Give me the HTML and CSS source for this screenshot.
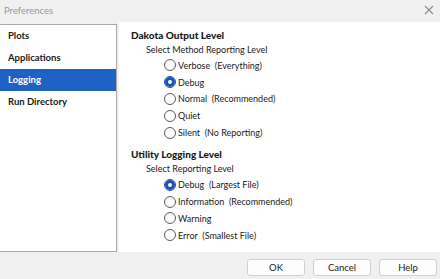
FILE: index.html
```html
<!DOCTYPE html>
<html lang="en">
<head>
<meta charset="UTF-8">
<title>Preferences</title>
<link rel="stylesheet" href="styles.css">
</head>
<body>
<div class="window">
    <div class="titlebar">
        <span class="title">Preferences</span>
        <svg class="close" width="10" height="10" viewBox="0 0 10 10">
            <path d="M1 1L9 9M9 1L1 9" stroke="#8a8a8a" stroke-width="1.1" fill="none"/>
        </svg>
    </div>
    <div class="main">
        <ul class="sidebar">
            <li>Plots</li>
            <li>Applications</li>
            <li class="active">Logging</li>
            <li>Run Directory</li>
        </ul>
        <div class="content">
            <div class="group">
                <h3>Dakota Output Level</h3>
                <div class="sub">Select Method Reporting Level</div>
                <label class="radio"><span class="dot"></span>Verbose  (Everything)</label>
                <label class="radio"><span class="dot on"></span>Debug</label>
                <label class="radio"><span class="dot"></span>Normal  (Recommended)</label>
                <label class="radio"><span class="dot"></span>Quiet</label>
                <label class="radio"><span class="dot"></span>Silent  (No Reporting)</label>
            </div>
            <div class="group second">
                <h3>Utility Logging Level</h3>
                <div class="sub">Select Reporting Level</div>
                <label class="radio"><span class="dot on"></span>Debug  (Largest File)</label>
                <label class="radio"><span class="dot"></span>Information  (Recommended)</label>
                <label class="radio"><span class="dot"></span>Warning</label>
                <label class="radio"><span class="dot"></span>Error  (Smallest File)</label>
            </div>
        </div>
    </div>
    <div class="footer">
        <button>OK</button>
        <button>Cancel</button>
        <button>Help</button>
    </div>
</div>
</body>
</html>
```

FILE: styles.css
```css
body {
  margin: 0;
  background-color: #f0f0f0;
  font-family: 'Lato', 'Noto Sans', sans-serif;
  font-size: 9px;
  color: #1a1a1a;
}

.window {
  width: 440px;
  height: 279px;
  display: flex;
  flex-direction: column;
}

.titlebar {
  height: 20px;
  display: flex;
  justify-content: space-between;
  align-items: center;
  padding: 0 6px 2px 4px;
}

.title {
  color: #9a9a9a;
  font-size: 9.5px;
}

.main {
  display: flex;
  height: 230px;
}

.sidebar {
  list-style: none;
  margin: 2px 0 0 0;
  padding: 0;
  width: 116px;
  background-color: #fff;
  border: 1px solid #a8a8a8;
  border-left: none;
}

.sidebar li {
  height: 22px;
  line-height: 22px;
  padding-left: 8px;
  font-size: 9.5px;
  font-weight: bold;
}

.sidebar li.active {
  background-color: #1f62c6;
  color: #fff;
}

.content {
  flex: 1;
  margin-left: 2px;
  background-color: #fff;
  padding: 6px 0 0 12px;
}

h3 {
  margin: 0;
  font-size: 10px;
  font-weight: 900;
  line-height: 15px;
}

.sub {
  padding-left: 15px;
  line-height: 14px;
}

.radio {
  display: flex;
  align-items: center;
  height: 16.8px;
  padding-left: 33px;
  white-space: pre;
}

.dot {
  width: 10px;
  height: 10px;
  border: 1px solid #5a5a5a;
  border-radius: 50%;
  margin-right: 2px;
  box-sizing: content-box;
}

.dot.on {
  border-color: #1c4fb8;
  background-color: #fff;
  box-shadow: inset 0 0 0 3px #1c4fb8;
}

.second {
  margin-top: 6.5px;
}

.footer {
  display: flex;
  justify-content: flex-end;
  gap: 8px;
  padding: 7px 3px 0 0;
}

button {
  width: 58px;
  height: 17px;
  padding: 0;
  font-family: 'Lato', 'Noto Sans', sans-serif;
  font-size: 9.5px;
  color: #1a1a1a;
  background-color: #fdfdfd;
  border: 1px solid #d0d0d0;
  border-radius: 3px;
}
```
